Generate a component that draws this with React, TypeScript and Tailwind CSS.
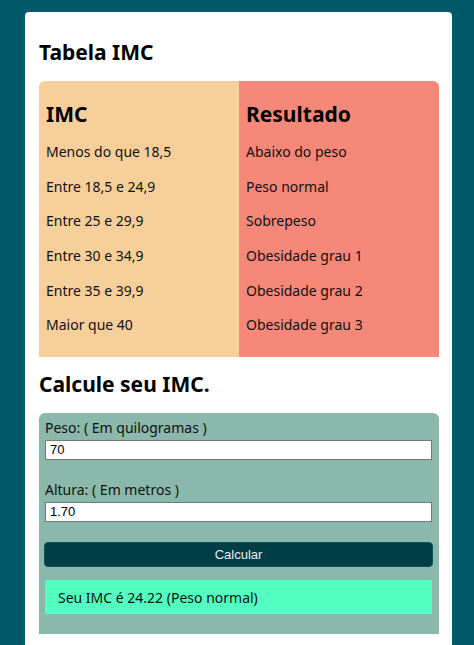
export default function App() {
  const rows = [
    ["Menos do que 18,5", "Abaixo do peso"],
    ["Entre 18,5 e 24,9", "Peso normal"],
    ["Entre 25 e 29,9", "Sobrepeso"],
    ["Entre 30 e 34,9", "Obesidade grau 1"],
    ["Entre 35 e 39,9", "Obesidade grau 2"],
    ["Maior que 40", "Obesidade grau 3"],
  ];
  return (
    <div className="min-h-[645px] bg-[#015868] pt-[12px] pb-[40px] overflow-hidden" style={{ fontFamily: '"Noto Sans", sans-serif' }}>
      <div className="ml-[25px] w-[427px] bg-white rounded-[4px] pl-[14px] pr-[13px] pt-[25px] pb-[20px] min-h-[700px]">
        <h2 className="text-[21px] font-bold leading-[30px] text-black">Tabela IMC</h2>
        <div className="mt-[14px] flex w-[400px] h-[276px] rounded-t-[6px] overflow-hidden">
          <div className="w-[200px] bg-[#f6cf9b] pl-[7px] pt-[18px]">
            <div className="text-[21px] font-bold leading-[30px] text-black">IMC</div>
            <div className="mt-[11px] flex flex-col">
              {rows.map((r) => (
                <div key={r[0]} className="h-[34.67px] text-[14px] leading-[20px] text-[#111] pt-[2px]">{r[0]}</div>
              ))}
            </div>
          </div>
          <div className="w-[200px] bg-[#f6887a] pl-[7px] pt-[18px]">
            <div className="text-[21px] font-bold leading-[30px] text-black">Resultado</div>
            <div className="mt-[11px] flex flex-col">
              {rows.map((r) => (
                <div key={r[1]} className="h-[34.67px] text-[14px] leading-[20px] text-[#111] pt-[2px]">{r[1]}</div>
              ))}
            </div>
          </div>
        </div>
        <h2 className="mt-[12px] text-[21px] font-bold leading-[30px] text-black">Calcule seu IMC.</h2>
        <div className="mt-[14px] w-[400px] h-[221px] bg-[#8ab8aa] rounded-t-[6px] pt-[5px] pl-[6px]">
          <div className="text-[14px] leading-[20px] text-[#111]">Peso: ( Em quilogramas )</div>
          <div className="mt-[2px] w-[387px] h-[20px] bg-white border border-[#777] text-[13px] leading-[18px] pl-[4px] text-black" style={{ fontFamily: '"Liberation Sans", Arial, sans-serif' }}>70</div>
          <div className="mt-[20px] text-[14px] leading-[20px] text-[#111]">Altura: ( Em metros )</div>
          <div className="mt-[2px] w-[387px] h-[20px] bg-white border border-[#777] text-[13px] leading-[18px] pl-[4px] text-black" style={{ fontFamily: '"Liberation Sans", Arial, sans-serif' }}>1.70</div>
          <div className="mt-[20px] -ml-[1px] w-[389px] h-[25px] bg-[#003d47] border border-[#0d5560] rounded-[4px] flex items-center justify-center text-[13px] text-[#e6eeee]" style={{ fontFamily: '"Liberation Sans", Arial, sans-serif' }}>Calcular</div>
          <div className="mt-[13px] w-[387px] h-[34px] bg-[#52ffc0] pl-[13px] flex items-center text-[14px] text-[#111]">Seu IMC é 24.22 (Peso normal)</div>
        </div>
      </div>
    </div>
  );
}
